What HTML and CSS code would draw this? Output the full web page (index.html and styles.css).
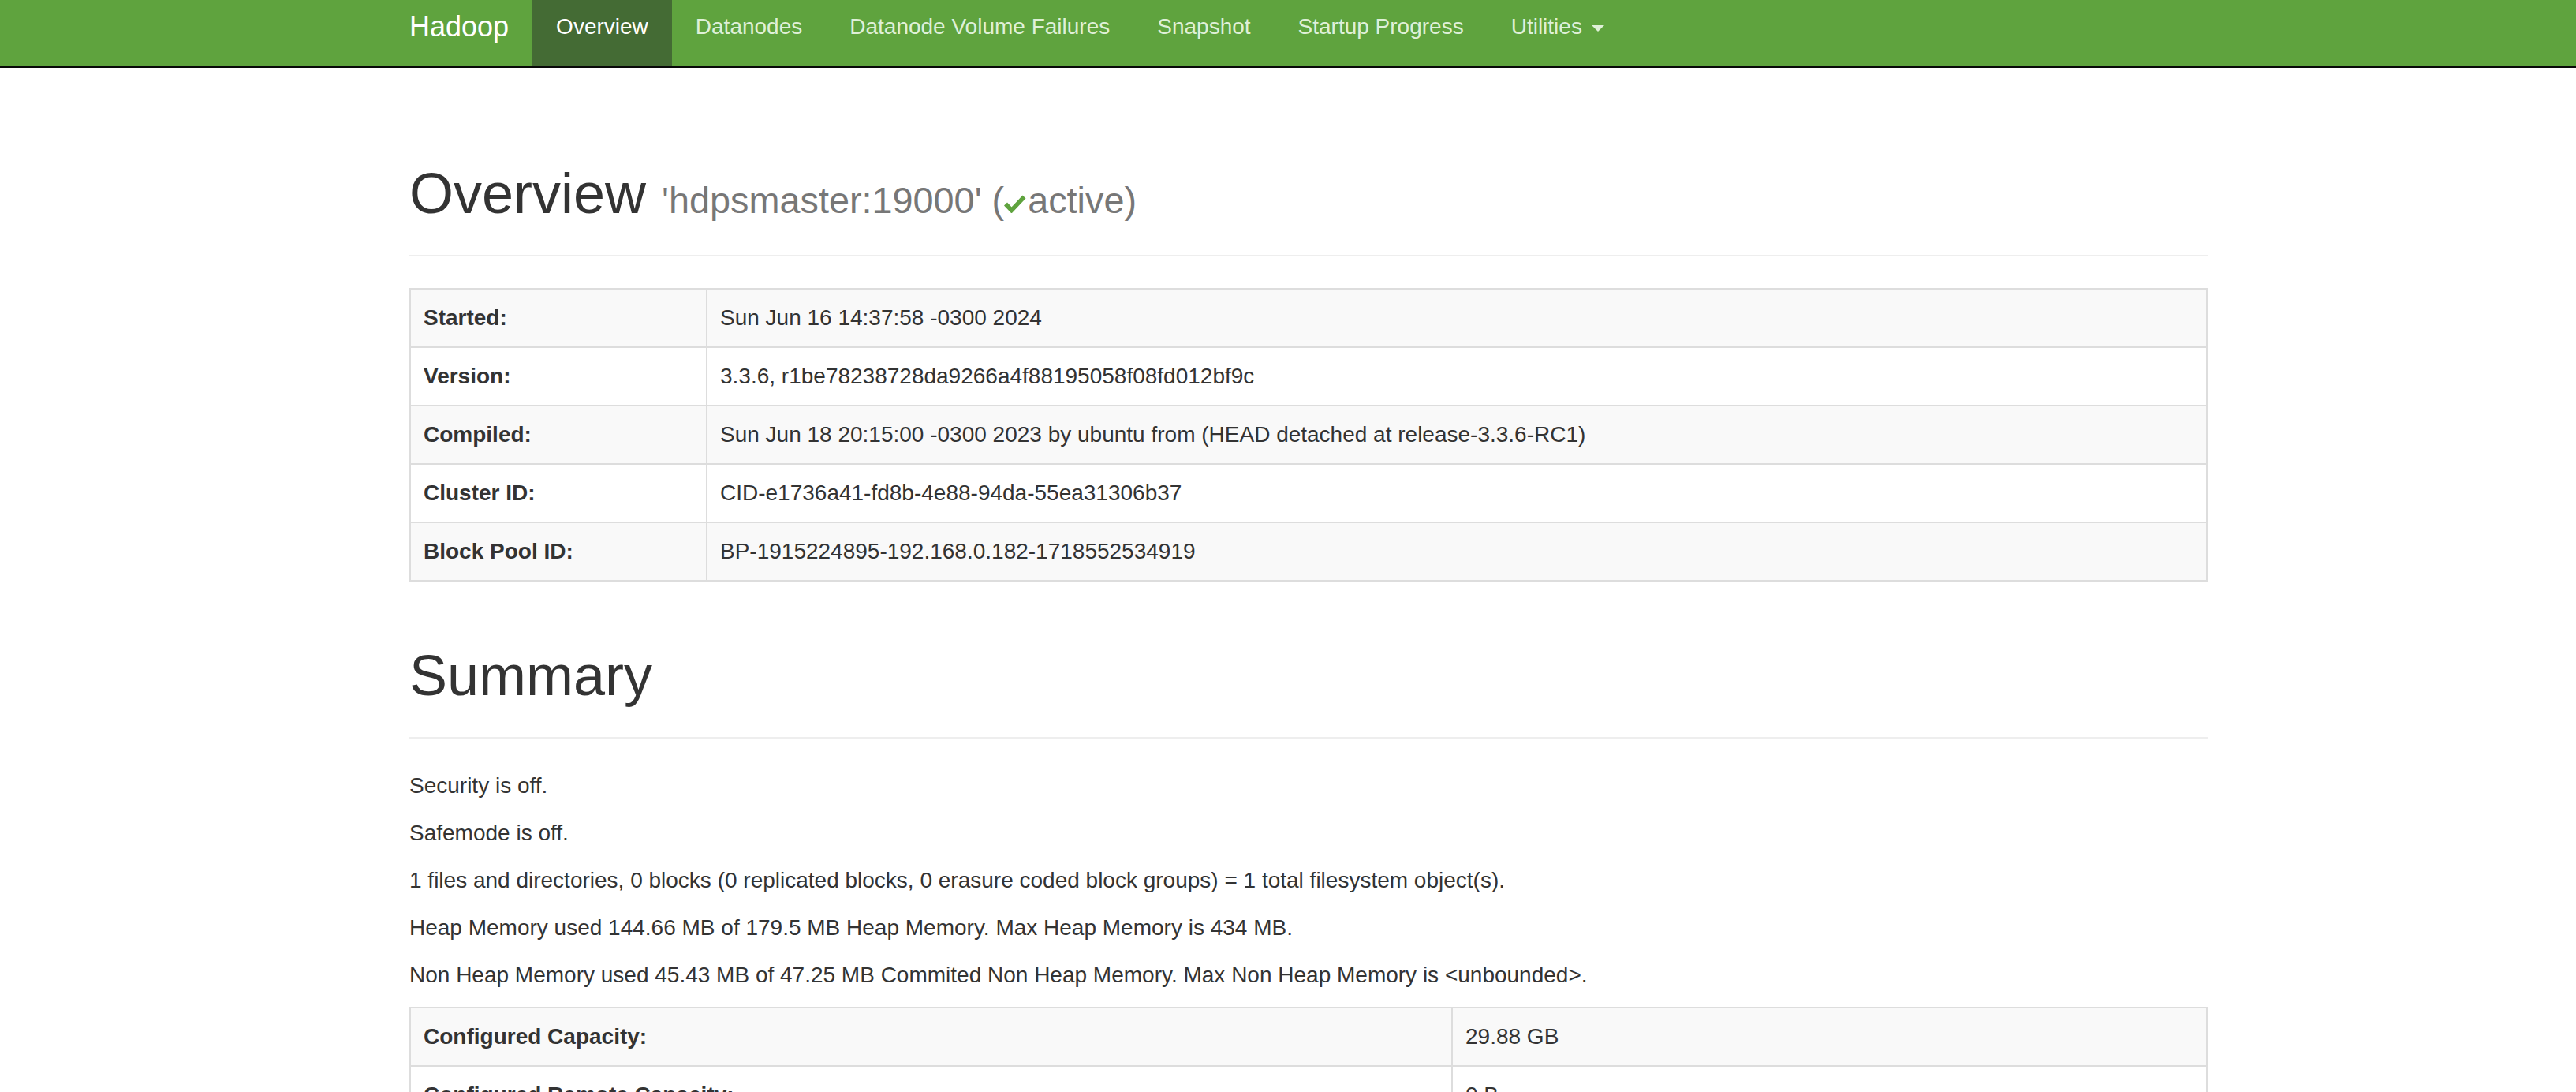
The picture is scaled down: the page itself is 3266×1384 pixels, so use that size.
FILE: index.html
```
<!DOCTYPE html>
<html lang="en">
<head>
<meta charset="utf-8">
<title>Namenode information</title>
<link rel="stylesheet" href="styles.css">
</head>
<body>
<header class="navbar">
  <div class="nav-container">
    <a class="brand" href="#">Hadoop</a>
    <ul class="nav">
      <li class="active"><a href="#">Overview</a></li>
      <li><a href="#">Datanodes</a></li>
      <li><a href="#">Datanode Volume Failures</a></li>
      <li><a href="#">Snapshot</a></li>
      <li><a href="#">Startup Progress</a></li>
      <li><a href="#">Utilities <span class="caret"></span></a></li>
    </ul>
  </div>
</header>

<div class="container">
  <div class="page-header">
    <h1>Overview <small>'hdpsmaster:19000' (<svg class="ok" width="28" height="23" viewBox="0 0 28 23"><polyline points="2,11.5 9.5,19.5 25.5,2.5" fill="none" stroke="#5fa33e" stroke-width="5.5" stroke-linejoin="miter"/></svg>active)</small></h1>
  </div>

  <table class="table table-overview">
    <tbody>
      <tr><th>Started:</th><td>Sun Jun 16 14:37:58 -0300 2024</td></tr>
      <tr><th>Version:</th><td>3.3.6, r1be78238728da9266a4f88195058f08fd012bf9c</td></tr>
      <tr><th>Compiled:</th><td>Sun Jun 18 20:15:00 -0300 2023 by ubuntu from (HEAD detached at release-3.3.6-RC1)</td></tr>
      <tr><th>Cluster ID:</th><td>CID-e1736a41-fd8b-4e88-94da-55ea31306b37</td></tr>
      <tr><th>Block Pool ID:</th><td>BP-1915224895-192.168.0.182-1718552534919</td></tr>
    </tbody>
  </table>

  <div class="page-header">
    <h1>Summary</h1>
  </div>

  <p>Security is off.</p>
  <p>Safemode is off.</p>
  <p>1 files and directories, 0 blocks (0 replicated blocks, 0 erasure coded block groups) = 1 total filesystem object(s).</p>
  <p>Heap Memory used 144.66 MB of 179.5 MB Heap Memory. Max Heap Memory is 434 MB.</p>
  <p>Non Heap Memory used 45.43 MB of 47.25 MB Commited Non Heap Memory. Max Non Heap Memory is &lt;unbounded&gt;.</p>

  <table class="table table-summary">
    <tbody>
      <tr><th>Configured Capacity:</th><td>29.88 GB</td></tr>
      <tr><th>Configured Remote Capacity:</th><td>0 B</td></tr>
      <tr><th>DFS Used:</th><td>24 KB (0%)</td></tr>
      <tr><th>Non DFS Used:</th><td>11.15 GB</td></tr>
      <tr><th>DFS Remaining:</th><td>17.18 GB (57.49%)</td></tr>
      <tr><th>Block Pool Used:</th><td>24 KB (0%)</td></tr>
      <tr><th>Live Nodes</th><td>1 (Decommissioned: 0, In Maintenance: 0)</td></tr>
      <tr><th>Dead Nodes</th><td>0 (Decommissioned: 0, In Maintenance: 0)</td></tr>
    </tbody>
  </table>
</div>
</body>
</html>
```
FILE: styles.css
```
html, body {
  margin: 0;
  padding: 0;
}

body {
  font-family: "Liberation Sans", Arial, Helvetica, sans-serif;
  font-size: 28px;
  line-height: 40px;
  color: #333;
  background: #fff;
}

/* ---------- navbar ---------- */
.navbar {
  background-color: #5fa33e;
  border-bottom: 2px solid #080808;
  height: 84px;
  margin-bottom: 40px;
}

.nav-container {
  display: flex;
  padding-left: 489px;
  height: 84px;
}

.brand {
  display: block;
  font-size: 36px;
  line-height: 40px;
  padding: 14px 30px 30px;
  color: #fff;
  text-decoration: none;
}

.nav {
  display: flex;
  list-style: none;
  margin: 0;
  padding: 0;
}

.nav li a {
  display: block;
  height: 84px;
  box-sizing: border-box;
  font-size: 28px;
  line-height: 40px;
  padding: 14px 30px 30px;
  color: #dff0d8;
  text-decoration: none;
}

.nav li.active a {
  background-color: #446b34;
  color: #fff;
}

.caret {
  display: inline-block;
  width: 0;
  height: 0;
  margin-left: 4px;
  vertical-align: middle;
  border-top: 8px solid #dff0d8;
  border-left: 8px solid transparent;
  border-right: 8px solid transparent;
}

/* ---------- content ---------- */
.container {
  display: flow-root;
  width: 2280px;
  margin-left: 519px;
}

.page-header {
  margin: 80px 0 40px;
  padding-bottom: 18px;
  border-bottom: 2px solid #eee;
}

h1 {
  margin: 0 0 20px;
  font-size: 72px;
  line-height: 79.2px;
  font-weight: 500;
  color: #333;
}

h1 small {
  font-size: 65%;
  font-weight: normal;
  line-height: 1;
  color: #777;
}

.ok {
  display: inline-block;
  vertical-align: baseline;
  margin-right: 2px;
}

p {
  margin: 0 0 20px;
}

/* ---------- tables ---------- */
.table {
  width: 100%;
  table-layout: fixed;
  border-collapse: collapse;
  border: 2px solid #ddd;
  margin-bottom: 40px;
}

.table th,
.table td {
  padding: 16px;
  line-height: 40px;
  border: 2px solid #ddd;
  text-align: left;
  vertical-align: top;
}

.table th {
  font-weight: bold;
}

.table tbody tr:nth-child(odd) {
  background-color: #f9f9f9;
}

.table-overview th {
  width: 342px;
}

.table-summary th {
  width: 1287px;
}
```
